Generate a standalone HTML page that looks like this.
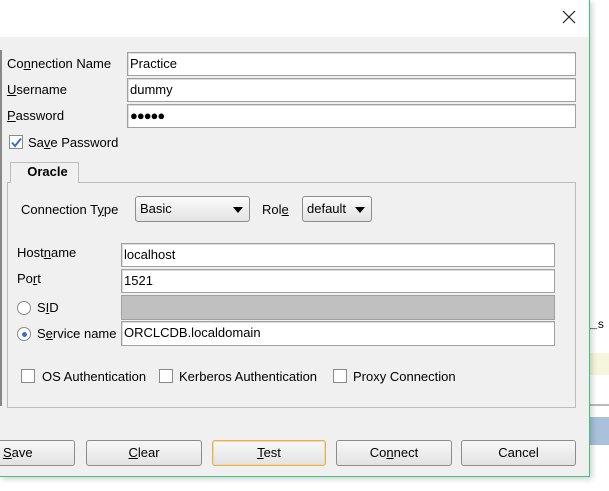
<!DOCTYPE html>
<html><head><style>
*{box-sizing:border-box;margin:0;padding:0}
body{width:609px;height:491px;background:#fff;position:relative;overflow:hidden;font-family:"Liberation Sans",sans-serif;font-size:13px;color:#000}
.a{position:absolute}
.in{position:absolute;background:#fff;border:1px solid #a0a0a0;box-shadow:inset 1px 1px 0 #ddd;padding:3px 2px;font-size:13px;line-height:15px}
.lb{position:absolute;font-size:13px;line-height:15px}
.cb{position:absolute;width:14px;height:14px;border:1px solid #8a8a8a;background:#fff}
.btn{position:absolute;top:440px;height:26px;border:1px solid #8c8c8c;border-radius:3px;background:linear-gradient(#f8f8f8,#e2e2e2);text-align:center;line-height:23px;font-size:13px}
.combo{position:absolute;height:26px;border:1px solid #8c8c8c;border-radius:3px;background:linear-gradient(#fafafa,#e4e4e4);line-height:24px;padding-left:4px}
.tri{position:absolute;right:6px;top:10px;width:0;height:0;border-left:5px solid transparent;border-right:5px solid transparent;border-top:6px solid #000}
.rad{position:absolute;width:14px;height:14px;border-radius:50%;border:1px solid #8a8a8a;background:#fff}
u{text-decoration:underline}
</style></head><body>
<!-- background app right side -->
<div class="a" style="left:590px;top:318px;font-family:'Liberation Mono',monospace;font-size:12px">_s</div>
<div class="a" style="left:590px;top:353px;width:19px;height:22px;background:#f6f6dc"></div>
<div class="a" style="left:590px;top:404px;width:19px;height:2px;background:#bbb"></div>
<div class="a" style="left:590px;top:417px;width:19px;height:28px;background:#a9c1dc"></div>
<!-- dialog -->
<div class="a" style="left:0;top:0;width:590px;height:477px;background:#f0f0f0;border-right:1px solid #3cc87a;border-bottom:1px solid #3cc87a;box-shadow:2px 2px 6px rgba(0,0,0,.2)"></div>
<div class="a" style="left:0;top:0;width:589px;height:37px;background:#fff"></div>
<svg class="a" style="left:562px;top:10px" width="14" height="14"><path d="M1 1L13 13M13 1L1 13" stroke="#222" stroke-width="1.2"/></svg>
<div class="a" style="left:0;top:50px;width:2px;height:356px;background:#888"></div>

<div class="lb" style="left:7px;top:56px">Co<u>n</u>nection Name</div>
<div class="lb" style="left:7px;top:82px"><u>U</u>sername</div>
<div class="lb" style="left:7px;top:108px"><u>P</u>assword</div>
<div class="in" style="left:127px;top:52px;width:449px;height:24px">Practice</div>
<div class="in" style="left:127px;top:78px;width:449px;height:24px">dummy</div>
<div class="in" style="left:127px;top:104px;width:449px;height:24px;font-weight:bold;letter-spacing:-1px">●●●●●</div>
<div class="cb" style="left:9px;top:135px"></div>
<svg class="a" style="left:10px;top:136px" width="13" height="13"><path d="M2 6.5L5 10L11 2.5" stroke="#3d6fc4" stroke-width="2" fill="none"/></svg>
<div class="lb" style="left:28px;top:135px">Sa<u>v</u>e Password</div>

<div class="a" style="left:7px;top:182px;width:569px;height:226px;border:1px solid #bcbcbc"></div>
<div class="a" style="left:10px;top:162px;width:69px;height:21px;border:1px solid #bcbcbc;border-bottom:none;background:#f0f0f0;font-weight:bold;text-align:center;line-height:18px;padding-left:6px">Oracle</div>

<div class="lb" style="left:21px;top:202px">Connection T<u>y</u>pe</div>
<div class="combo" style="left:135px;top:196px;width:115px">Basic<div class="tri"></div></div>
<div class="lb" style="left:262px;top:202px">Rol<u>e</u></div>
<div class="combo" style="left:302px;top:196px;width:70px">default<div class="tri"></div></div>

<div class="lb" style="left:17px;top:245px">Host<u>n</u>ame</div>
<div class="lb" style="left:17px;top:271px">Po<u>r</u>t</div>
<div class="in" style="left:121px;top:243px;width:434px;height:24px">localhost</div>
<div class="in" style="left:121px;top:269px;width:434px;height:24px">1521</div>
<div class="in" style="left:121px;top:295px;width:434px;height:25px;background:#c0c0c0;box-shadow:none"></div>
<div class="in" style="left:121px;top:321px;width:434px;height:25px">ORCLCDB.localdomain</div>
<div class="rad" style="left:17px;top:301px"></div>
<div class="lb" style="left:37px;top:300px">S<u>I</u>D</div>
<div class="rad" style="left:17px;top:327px"></div>
<div class="a" style="left:22px;top:332px;width:5px;height:5px;border-radius:50%;background:#3d6fc4"></div>
<div class="lb" style="left:37px;top:326px">S<u>e</u>rvice name</div>

<div class="cb" style="left:21px;top:369px"></div>
<div class="lb" style="left:42px;top:369px">OS Authentication</div>
<div class="cb" style="left:159px;top:369px"></div>
<div class="lb" style="left:179px;top:369px">Kerberos Authentication</div>
<div class="cb" style="left:333px;top:369px"></div>
<div class="lb" style="left:353px;top:369px">Proxy Connection</div>

<div class="btn" style="left:-10px;width:85px;text-align:left;padding-left:12px"><u>S</u>ave</div>
<div class="btn" style="left:86px;width:116px"><u>C</u>lear</div>
<div class="btn" style="left:212px;width:114px;border-color:#e0b060;box-shadow:inset 0 0 0 1px #f6d89a"><u>T</u>est</div>
<div class="btn" style="left:336px;width:116px">Co<u>n</u>nect</div>
<div class="btn" style="left:461px;width:115px">Cancel</div>
</body></html>
